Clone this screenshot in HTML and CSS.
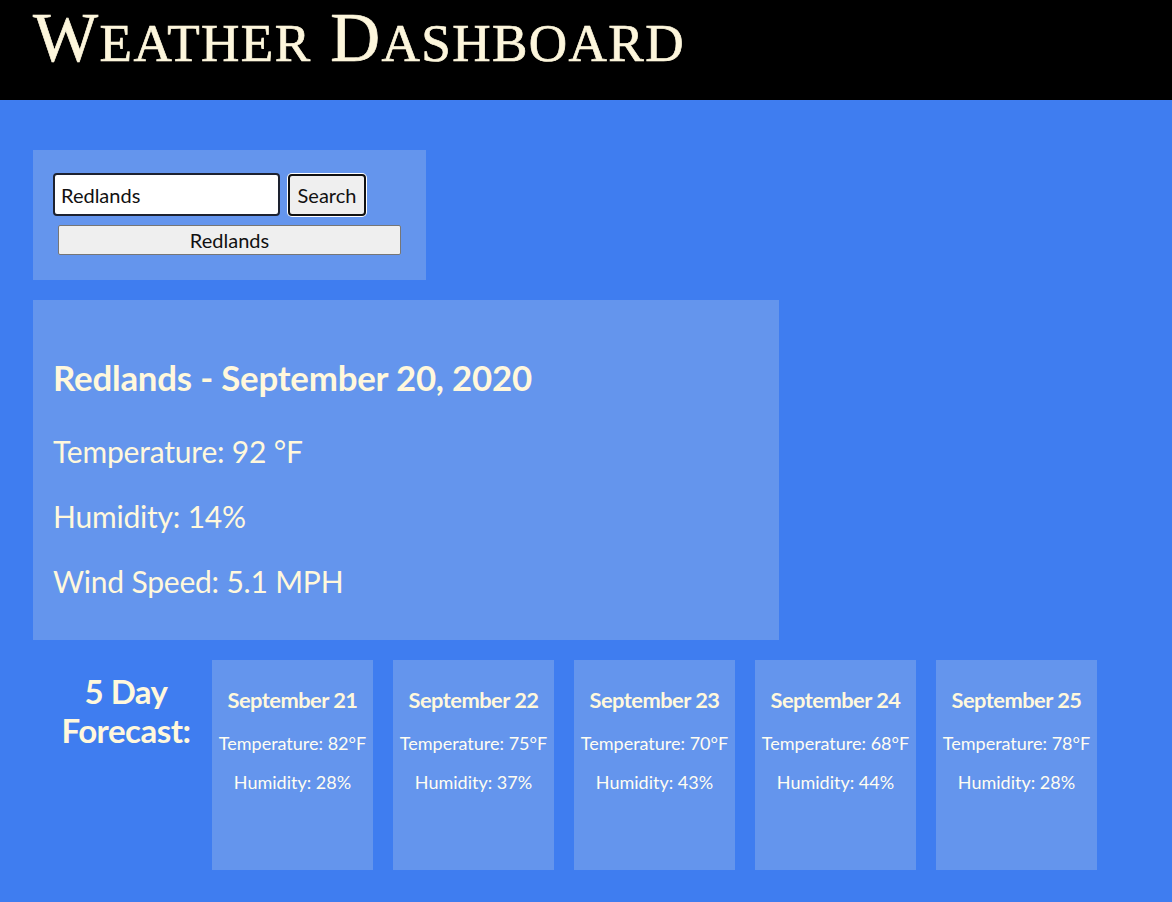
FILE: index.html
```html
<!DOCTYPE html>
<html>
<head>
<meta charset="utf-8">
<link rel="stylesheet" href="styles.css">
</head>
<body>
<header class="topbar">
  <h1 class="brand">W<span class="sc">eather</span> D<span class="sc">ashboard</span></h1>
</header>
<main class="content">
  <section class="search-panel">
    <div class="search-row">
      <input class="search-input" type="text" value="Redlands">
      <button class="search-btn">Search</button>
    </div>
    <button class="history-btn">Redlands</button>
  </section>
  <section class="current">
    <h2 class="current-title">Redlands - September 20, 2020</h2>
    <p class="current-line">Temperature: 92 °F</p>
    <p class="current-line">Humidity: 14%</p>
    <p class="current-line">Wind Speed: 5.1 MPH</p>
  </section>
  <section class="forecast">
    <h2 class="forecast-label">5 Day<br>Forecast:</h2>
    <div class="cards">
      <div class="card"><h3 class="card-title">September 21</h3><p class="card-temp">Temperature: 82°F</p><p class="card-hum">Humidity: 28%</p></div>
      <div class="card"><h3 class="card-title">September 22</h3><p class="card-temp">Temperature: 75°F</p><p class="card-hum">Humidity: 37%</p></div>
      <div class="card"><h3 class="card-title">September 23</h3><p class="card-temp">Temperature: 70°F</p><p class="card-hum">Humidity: 43%</p></div>
      <div class="card"><h3 class="card-title">September 24</h3><p class="card-temp">Temperature: 68°F</p><p class="card-hum">Humidity: 44%</p></div>
      <div class="card"><h3 class="card-title">September 25</h3><p class="card-temp">Temperature: 78°F</p><p class="card-hum">Humidity: 28%</p></div>
    </div>
  </section>
</main>
</body>
</html>
```
FILE: styles.css
```css
html, body {
  margin: 0;
  padding: 0;
}
body {
  background: #3f7df0;
  font-family: Lato, "Open Sans", sans-serif;
  color: #fff8dc;
  min-height: 902px;
}
.topbar {
  background: #000;
  height: 100px;
  padding-left: 33px;
  box-sizing: border-box;
}
.brand {
  margin: 0;
  font-family: "Liberation Serif", "DejaVu Serif", serif;
  font-weight: normal;
  font-size: 69px;
  line-height: 76px;
  color: #fdf6dc;
  letter-spacing: 1.4px;
  white-space: nowrap;
  -webkit-text-stroke: 0.7px #fdf6dc;
}
.sc {
  text-transform: uppercase;
  font-size: 0.77em;
}
.content {
  padding: 50px 33px 30px 33px;
  display: flex;
  flex-direction: column;
  align-items: flex-start;
  gap: 20px;
}
.search-panel {
  background: #6495ed;
  width: 393px;
  height: 130px;
  box-sizing: border-box;
  padding: 23px 20px 0 20px;
  display: flex;
  flex-direction: column;
  gap: 9px;
}
.search-row {
  display: flex;
  align-items: center;
  gap: 8px;
}
.search-input {
  width: 227px;
  height: 43px;
  box-sizing: border-box;
  border: 2px solid #1d2230;
  border-radius: 4px;
  padding: 0 6px;
  font-family: Lato, sans-serif;
  font-size: 20px;
  color: #111;
  background: #fff;
}
.search-btn {
  width: 78px;
  height: 42px;
  box-sizing: border-box;
  border: 2px solid #111;
  border-radius: 4px;
  box-shadow: 0 0 0 1px #fff;
  background: #efefef;
  font-family: Lato, sans-serif;
  font-size: 20px;
  color: #111;
  padding: 0;
}
.history-btn {
  margin-left: 5px;
  width: 343px;
  height: 30px;
  box-sizing: border-box;
  border: 1px solid #767676;
  border-radius: 2px;
  background: #efefef;
  font-family: Lato, sans-serif;
  font-size: 20px;
  line-height: 26px;
  color: #111;
  padding: 0;
}
.current {
  background: #6495ed;
  width: 746px;
  height: 340px;
  box-sizing: border-box;
  padding: 58px 20px 0 20px;
}
.current-title {
  margin: 0 0 35px 0;
  font-size: 34.8px;
  font-weight: bold;
  line-height: 40px;
  letter-spacing: -0.2px;
}
.current-line {
  margin: 0 0 28px 0;
  font-size: 30px;
  line-height: 37px;
  letter-spacing: -0.2px;
}
.forecast {
  display: flex;
  align-items: flex-start;
}
.forecast-label {
  margin: 0;
  width: 172px;
  margin-left: 7px;
  padding-top: 12px;
  text-align: center;
  font-size: 33px;
  font-weight: bold;
  line-height: 39px;
  letter-spacing: -0.5px;
}
.cards {
  display: flex;
  gap: 20px;
}
.card {
  background: #6495ed;
  width: 161px;
  height: 210px;
  box-sizing: border-box;
  padding-top: 27px;
  text-align: center;
}
.card-title {
  margin: 0 0 19px 0;
  font-size: 21.8px;
  font-weight: bold;
  line-height: 26px;
  letter-spacing: -0.5px;
}
.card-temp, .card-hum {
  margin: 0 0 17px 0;
  font-size: 18px;
  line-height: 22px;
  color: #fffdf2;
  white-space: nowrap;
}
```
